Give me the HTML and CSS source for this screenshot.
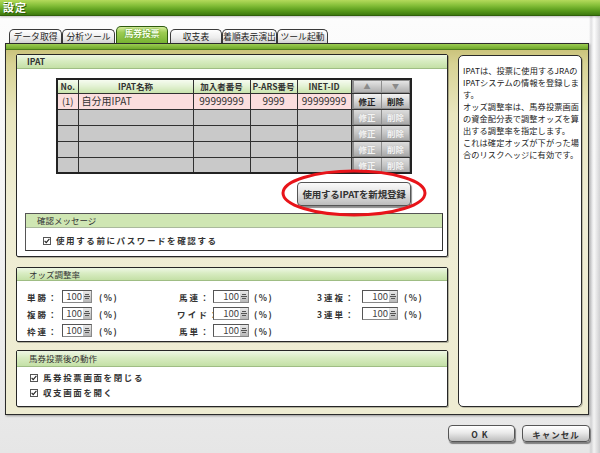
FILE: index.html
```html
<!DOCTYPE html>
<html lang="ja">
<head>
<meta charset="utf-8">
<title>設定</title>
<link rel="stylesheet" href="styles.css">
</head>
<body>
<div class="titlebar"><span class="title">設定</span></div>
<div class="tabs">
  <div class="tab w53">データ取得</div>
  <div class="tab w53">分析ツール</div>
  <div class="tab active">馬券投票</div>
  <div class="tab w52">収支表</div>
  <div class="tab w55">着順表示演出</div>
  <div class="tab w51">ツール起動</div>
</div>
<div class="frame">
  <div class="frame-top"></div>
  <div class="frame-body">
    <div class="leftcol">
      <section class="box ipat">
        <div class="box-h">IPAT</div>
        <div class="ipat-body">
          <table class="grid">
            <colgroup>
              <col class="c-no"><col class="c-name"><col class="c-kanyu"><col class="c-pars"><col class="c-inet"><col class="c-ops">
            </colgroup>
            <thead>
              <tr><th>No.</th><th>IPAT名称</th><th>加入者番号</th><th>P-ARS番号</th><th>INET-ID</th><th class="ops"><div class="opsw"><span class="mini">▲</span><span class="mini">▼</span></div></th></tr>
            </thead>
            <tbody>
              <tr class="on"><td class="no">(1)</td><td class="name">自分用IPAT</td><td>99999999</td><td>9999</td><td>99999999</td><td class="ops"><div class="opsw"><span class="b">修正</span><span class="b">削除</span></div></td></tr>
              <tr><td></td><td></td><td></td><td></td><td></td><td class="ops"><div class="opsw"><span class="b dis">修正</span><span class="b dis">削除</span></div></td></tr>
              <tr><td></td><td></td><td></td><td></td><td></td><td class="ops"><div class="opsw"><span class="b dis">修正</span><span class="b dis">削除</span></div></td></tr>
              <tr><td></td><td></td><td></td><td></td><td></td><td class="ops"><div class="opsw"><span class="b dis">修正</span><span class="b dis">削除</span></div></td></tr>
              <tr><td></td><td></td><td></td><td></td><td></td><td class="ops"><div class="opsw"><span class="b dis">修正</span><span class="b dis">削除</span></div></td></tr>
            </tbody>
          </table>
          <div class="reg-row"><button class="reg">使用するIPATを新規登録</button></div>
          <div class="sub">
            <div class="sub-h">確認メッセージ</div>
            <div class="sub-body">
              <label class="chk"><svg class="cb" width="8" height="8" viewBox="0 0 8 8"><rect x="0.5" y="0.5" width="7" height="7" fill="#fff" stroke="#555"/><path d="M1.6 3.8 L3.2 5.6 L6.4 1.8" fill="none" stroke="#222" stroke-width="1.1"/></svg><span>使用する前にパスワードを確認する</span></label>
            </div>
          </div>
        </div>
        <svg class="ring" width="150" height="54" viewBox="0 0 150 54"><ellipse cx="75" cy="27" rx="71" ry="22" fill="none" stroke="#e8141a" stroke-width="3"/></svg>
      </section>

      <section class="box odds">
        <div class="box-h">オッズ調整率</div>
        <div class="odds-grid">
          <span class="lb">単勝：</span><span class="spin s30"><span class="v">100</span><span class="ar"></span></span><span class="pct p1">(%)</span>
          <span class="lb r">馬連：</span><span class="spin"><span class="v">100</span><span class="ar"></span></span><span class="pct p2">(%)</span>
          <span class="lb">3連複：</span><span class="spin"><span class="v">100</span><span class="ar"></span></span><span class="pct p3">(%)</span>

          <span class="lb">複勝：</span><span class="spin s30"><span class="v">100</span><span class="ar"></span></span><span class="pct p1">(%)</span>
          <span class="lb r">ワイド：</span><span class="spin"><span class="v">100</span><span class="ar"></span></span><span class="pct p2">(%)</span>
          <span class="lb">3連単：</span><span class="spin"><span class="v">100</span><span class="ar"></span></span><span class="pct p3">(%)</span>

          <span class="lb">枠連：</span><span class="spin s30"><span class="v">100</span><span class="ar"></span></span><span class="pct p1">(%)</span>
          <span class="lb r">馬単：</span><span class="spin"><span class="v">100</span><span class="ar"></span></span><span class="pct p2">(%)</span>
        </div>
      </section>

      <section class="box after">
        <div class="box-h">馬券投票後の動作</div>
        <div class="after-body">
          <label class="chk"><svg class="cb" width="8" height="8" viewBox="0 0 8 8"><rect x="0.5" y="0.5" width="7" height="7" fill="#fff" stroke="#555"/><path d="M1.6 3.8 L3.2 5.6 L6.4 1.8" fill="none" stroke="#222" stroke-width="1.1"/></svg><span>馬券投票画面を閉じる</span></label>
          <label class="chk"><svg class="cb" width="8" height="8" viewBox="0 0 8 8"><rect x="0.5" y="0.5" width="7" height="7" fill="#fff" stroke="#555"/><path d="M1.6 3.8 L3.2 5.6 L6.4 1.8" fill="none" stroke="#222" stroke-width="1.1"/></svg><span>収支画面を開く</span></label>
        </div>
      </section>
    </div>

    <aside class="help">
      <p>IPATは、投票に使用するJRAの<br>IPATシステムの情報を登録しま<br>す。<br>オッズ調整率は、馬券投票画面<br>の資金配分表で調整オッズを算<br>出する調整率を指定します。<br>これは確定オッズが下がった場<br>合のリスクヘッジに有効です。</p>
    </aside>
  </div>
</div>
<div class="footer">
  <button class="fbtn ok">OK</button>
  <button class="fbtn">キャンセル</button>
</div>
</body>
</html>
```

FILE: styles.css
```css
* { box-sizing: border-box; }
html, body { margin: 0; padding: 0; }
body {
  width: 600px;
  height: 453px;
  overflow: hidden;
  background:
    linear-gradient(to right, rgba(0,0,0,0) 589px, rgba(170,170,175,0.35) 591px, rgba(255,255,255,0.5) 594px, rgba(160,160,165,0.4) 600px),
    linear-gradient(to bottom, #fdfdfd 0, #f4f4f4 200px, #e6e6e6 453px);
  font-family: "Noto Sans CJK JP", "Noto Sans", sans-serif;
  color: #222;
  position: relative;
}

/* title bar */
.titlebar {
  height: 16px;
  background: linear-gradient(to bottom, #b4da5c 0, #86c03a 35%, #5a9c1c 70%, #3d7a0e 100%);
  border-bottom: 1px solid #2f5f0a;
  box-shadow: 0 1px 2px rgba(0,0,0,0.25);
  display: flex;
  align-items: center;
  padding-left: 3px;
}
.title {
  color: #fff;
  font-weight: bold;
  font-size: 11px;
  line-height: 1;
  text-shadow: 1px 1px 0 #2d5a08;
  letter-spacing: 1px;
}

/* tabs */
.tabs {
  height: 27px;
  display: flex;
  align-items: flex-end;
  padding-left: 9px;
}
.tab {
  height: 14px;
  border: 1px solid #3a3a3a;
  border-bottom: none;
  border-radius: 5px 5px 0 0;
  background: linear-gradient(to bottom, #ffffff 0, #ececec 60%, #d2d2d2 100%);
  font-size: 8.8px;
  line-height: 13px;
  text-align: center;
  color: #222;
  white-space: nowrap;
}
.w53 { width: 53px; }
.w52 { width: 52px; margin-left: 2px; }
.w55 { width: 55px; }
.w51 { width: 51px; }
.tab.active {
  width: 52px;
  height: 17px;
  margin-left: 1px;
  line-height: 14px;
  border-color: #2e5a10;
  background: linear-gradient(to bottom, #d4ec9a 0, #9ccc52 35%, #78b232 100%);
  color: #f4ffe8;
  text-shadow: 0 0 2px #3d7a10;
  font-weight: bold;
}

/* frame */
.frame {
  margin-left: 5px;
  width: 584px;
  height: 372px;
  border: 1px solid #2b2b2b;
  background: linear-gradient(to bottom, #c5bd72 0, #d8d394 20px, #e9e6bf 70px, #efedd4 160px, #eeecd2 100%);
  box-shadow: 1px 1px 2px rgba(0,0,0,0.35);
  display: flex;
  flex-direction: column;
}
.frame-top {
  height: 6px;
  background: linear-gradient(to bottom, #9ccc52, #6fa82a);
  border-bottom: 1px solid #4d7d1c;
}
.frame-body {
  flex: 1;
  display: flex;
  gap: 10px;
  padding: 4px 6px 6px 10px;
}
.leftcol {
  width: 432px;
  display: flex;
  flex-direction: column;
}

/* boxes */
.box {
  background: #fff;
  border: 1px solid #262626;
  box-shadow: 1px 1px 0 rgba(0,0,0,0.25);
  border-radius: 2px;
  position: relative;
}
.box-h {
  height: 14px;
  background: linear-gradient(to bottom, #eef7e4 0, #d8ecc2 45%, #c4e0a6 100%);
  border-bottom: 1px solid #9fbd84;
  font-size: 8.5px;
  line-height: 13px;
  padding-left: 13px;
  color: #333;
}
.ipat { height: 203px; }
.ipat .box-h { font-weight: bold; padding-left: 10px; }
.odds { height: 75px; margin-top: 10px; }
.after { height: 57px; margin-top: 8px; }
.after .box-h { height: 16px; line-height: 15px; padding-left: 12px; }
.odds .box-h { height: 13px; line-height: 12px; padding-left: 12px; }

/* ipat */
.ipat-body { padding: 9px 4px 0 8px; }
.grid {
  margin-left: 31px;
  width: 354px;
  border-collapse: collapse;
  table-layout: fixed;
  border: 2px solid #222;
}
.c-no { width: 21px; }
.c-name { width: 115px; }
.c-kanyu { width: 57px; }
.c-pars { width: 47px; }
.c-inet { width: 54px; }
.c-ops { width: 60px; }
.grid th, .grid td {
  border: 1px solid #303030;
  padding: 0;
  white-space: nowrap;
  overflow: hidden;
}
.grid th {
  height: 14px;
  font-size: 8.5px;
  font-weight: bold;
  line-height: 12px;
  color: #333;
  background: linear-gradient(to bottom, #f6fbf0 0, #e2f1d2 50%, #c9e4ad 100%);
  text-align: center;
}
.grid td {
  height: 16px;
  background: #c9c9c9;
  font-size: 10px;
  line-height: 14px;
  text-align: center;
  color: #333;
}
.grid tr.on td { background: #fbdede; }
.grid td.no { font-size: 9.5px; }
.grid td.name { text-align: left; padding-left: 3px; }
.grid .ops, .grid tr.on td.ops {
  background: #8e8e8e;
  padding: 0;
}
.opsw {
  display: flex;
  justify-content: space-between;
  padding: 0 1px 0 2px;
  height: 100%;
  align-items: center;
}
.mini {
  width: 27px;
  height: 11px;
  background: linear-gradient(to bottom, #e4e4e4, #b0b0b0);
  color: #8a8a8a;
  font-size: 7px;
  line-height: 11px;
  text-align: center;
}
.b {
  width: 27px;
  height: 14px;
  background: linear-gradient(to bottom, #f2f2f2 0, #d8d8d8 50%, #b4b4b4 100%);
  font-size: 8.5px;
  line-height: 14px;
  text-align: center;
  color: #222;
  font-weight: bold;
}
.b.dis {
  color: #f4f4f4;
  background: linear-gradient(to bottom, #dcdcdc 0, #c6c6c6 50%, #a8a8a8 100%);
  text-shadow: 0 0 1px #aaa;
}
.reg-row {
  display: flex;
  justify-content: flex-end;
  padding-right: 32px;
  margin-top: 8px;
}
.reg {
  width: 114px;
  height: 24px;
  border: 1px solid #555;
  border-radius: 4px;
  background: linear-gradient(to bottom, #fafafa 0, #e4e4e4 45%, #bcbcbc 100%);
  box-shadow: 1px 2px 1px rgba(0,0,0,0.45);
  font-family: inherit;
  font-size: 9.5px;
  font-weight: bold;
  color: #333;
  padding: 0;
  letter-spacing: -0.2px;
}
.ring {
  position: absolute;
  left: 262px;
  top: 111px;
  pointer-events: none;
}
.sub {
  margin-top: 7px;
  height: 38px;
  border: 1px solid #555;
  border-right-color: #333;
  border-bottom-color: #333;
  background: #fff;
}
.sub-h {
  height: 14px;
  background: #cfe6b3;
  border-bottom: 1px solid #aab99c;
  font-size: 8.5px;
  line-height: 13px;
  padding-left: 11px;
  color: #333;
}
.sub-body { padding: 5px 0 0 17px; }

.chk {
  display: flex;
  align-items: center;
  font-size: 8.5px;
  line-height: 15px;
  letter-spacing: 1.6px;
  font-weight: bold;
  color: #333;
  white-space: nowrap;
}
.cb { margin-right: 5px; flex: none; }

/* odds */
.odds-grid {
  display: grid;
  grid-template-columns: 35px 30px 85px 36px 36px 68px 45px 36px auto;
  grid-auto-rows: 17px;
  padding: 7px 0 0 10px;
  align-items: center;
}
.lb {
  font-size: 8.5px;
  font-weight: bold;
  letter-spacing: 2px;
  color: #333;
  white-space: nowrap;
}
.lb.r { text-align: right; padding-right: 2px; letter-spacing: 2.2px; }
.spin {
  display: flex;
  height: 13px;
  border: 1px solid #888;
  border-top-color: #555;
  border-left-color: #555;
  background: #fff;
}
.spin.s30 { width: 30px; }
.spin .v {
  flex: 1;
  text-align: right;
  font-size: 9.5px;
  line-height: 11px;
  color: #444;
  padding-right: 1px;
}
.spin .ar {
  width: 8px;
  background:
    linear-gradient(#555,#555) center 3px / 4px 1px no-repeat,
    linear-gradient(#555,#555) center 5px / 6px 1px no-repeat,
    linear-gradient(#555,#555) center 7px / 4px 1px no-repeat,
    linear-gradient(to bottom, #e8e8e8, #b8b8b8);
}
.pct {
  font-size: 8.5px;
  font-weight: bold;
  letter-spacing: 1.5px;
  color: #333;
}
.p1 { padding-left: 7px; }
.p2 { padding-left: 5px; }
.p3 { padding-left: 6px; }

/* after */
.after-body { padding: 3px 0 0 13px; }

/* help */
.help {
  width: 124px;
  height: 352px;
  margin-top: 1px;
  background: #fff;
  border: 1.5px solid #2a2a2a;
  border-radius: 5px;
  box-shadow: 1px 1px 0 rgba(0,0,0,0.2);
  padding: 8px 0 0 4px;
}
.help p {
  margin: 0;
  font-size: 8.2px;
  line-height: 12px;
  color: #222;
  white-space: nowrap;
  letter-spacing: 0.1px;
}

/* footer */
.footer {
  display: flex;
  justify-content: flex-end;
  gap: 7px;
  padding: 10px 10px 0 0;
}
.fbtn {
  height: 17px;
  width: 68px;
  border: 1px solid #555;
  border-radius: 4px;
  background: linear-gradient(to bottom, #ffffff 0, #eaeaea 45%, #bdbdbd 100%);
  box-shadow: 1px 2px 1px rgba(0,0,0,0.45);
  font-family: inherit;
  font-size: 8.5px;
  font-weight: bold;
  color: #333;
  padding: 0;
  letter-spacing: 1px;
}
.fbtn.ok { width: 67px; letter-spacing: 4px; }
```
